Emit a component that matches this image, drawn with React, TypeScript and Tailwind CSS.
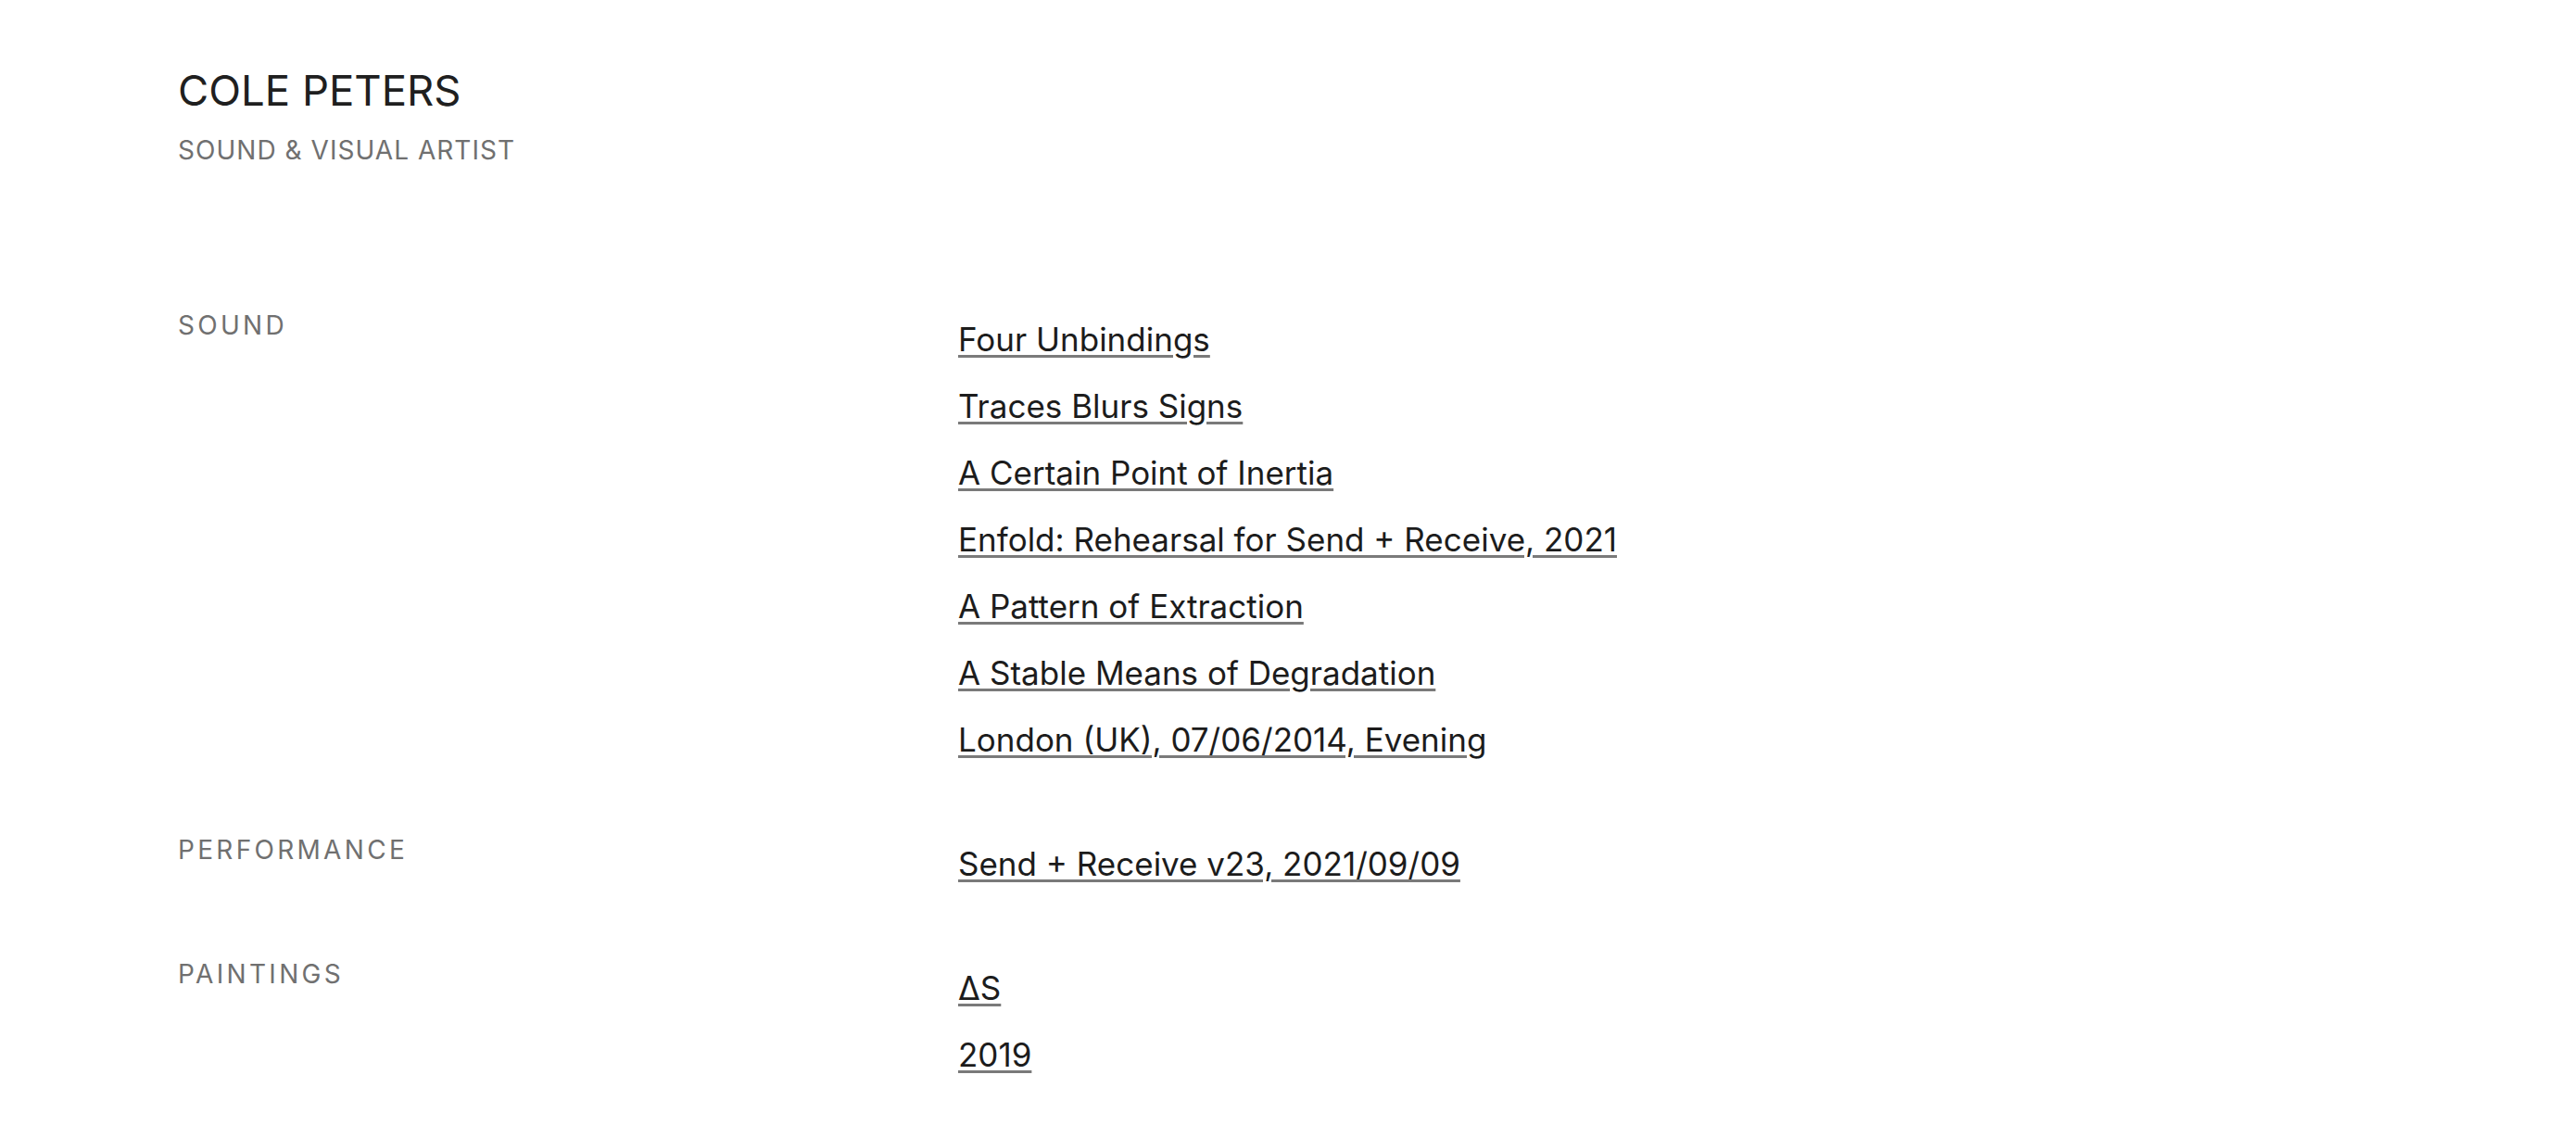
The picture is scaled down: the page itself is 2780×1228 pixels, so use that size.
const sections: { label: string; items: string[] }[] = [
  {
    label: 'Sound',
    items: [
      'Four Unbindings',
      'Traces Blurs Signs',
      'A Certain Point of Inertia',
      'Enfold: Rehearsal for Send + Receive, 2021',
      'A Pattern of Extraction',
      'A Stable Means of Degradation',
      'London (UK), 07/06/2014, Evening',
    ],
  },
  {
    label: 'Performance',
    items: ['Send + Receive v23, 2021/09/09'],
  },
  {
    label: 'Paintings',
    items: ['ΔS', '2019'],
  },
];

export default function App() {
  return (
    <div className="min-h-screen bg-white font-['Inter',sans-serif] text-[#1c1c1c] pl-[192px] pt-[70px] pb-16">
      <header className="flex flex-col gap-[16px]">
        <h1 className="text-[45.5px] leading-[56px] font-normal text-[#1f1f1f]">COLE PETERS</h1>
        <p className="text-[28px] leading-[40px] tracking-[0.037em] text-[#707070]">SOUND &amp; VISUAL ARTIST</p>
      </header>

      <main className="mt-[148px] flex flex-col gap-[62px]">
        {sections.map((s) => (
          <section key={s.label} className="flex">
            <h2 className="w-[842px] shrink-0 text-[28px] leading-[42px] uppercase tracking-[0.118em] text-[#707070]">
              {s.label}
            </h2>
            <ul className="flex flex-col">
              {s.items.map((item) => (
                <li key={item} className="text-[35px] leading-[72px]">
                  <a
                    href="#"
                    className="underline decoration-[3px] underline-offset-[4px] decoration-[#7a7a7a] text-[#1c1c1c]"
                  >
                    {item}
                  </a>
                </li>
              ))}
            </ul>
          </section>
        ))}
      </main>
    </div>
  );
}
